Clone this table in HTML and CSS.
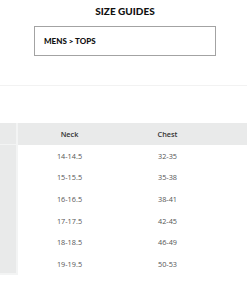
FILE: index.html
```html
<!DOCTYPE html>
<html>
<head>
<meta charset="utf-8">
<link rel="stylesheet" href="styles.css">
</head>
<body>
<div class="page">
  <h1 class="title">SIZE GUIDES</h1>
  <div class="select">MENS &gt; TOPS</div>
  <div class="sep"></div>
  <div class="table">
    <div class="row head">
      <div class="stick"></div>
      <div class="cell">Neck</div>
      <div class="cell">Chest</div>
      <div class="cell"></div>
    </div>
    <div class="row"><div class="stick"></div><div class="cell">14-14.5</div><div class="cell">32-35</div><div class="cell"></div></div>
    <div class="row"><div class="stick"></div><div class="cell">15-15.5</div><div class="cell">35-38</div><div class="cell"></div></div>
    <div class="row"><div class="stick"></div><div class="cell">16-16.5</div><div class="cell">38-41</div><div class="cell"></div></div>
    <div class="row"><div class="stick"></div><div class="cell">17-17.5</div><div class="cell">42-45</div><div class="cell"></div></div>
    <div class="row"><div class="stick"></div><div class="cell">18-18.5</div><div class="cell">46-49</div><div class="cell"></div></div>
    <div class="row last"><div class="stick"></div><div class="cell">19-19.5</div><div class="cell">50-53</div><div class="cell"></div></div>
  </div>
</div>
</body>
</html>
```
FILE: styles.css
```css
html, body {
  margin: 0;
  padding: 0;
  background: #fff;
}
.page {
  width: 247px;
  height: 296px;
  overflow: hidden;
  font-family: "Open Sans", sans-serif;
}
.title {
  margin: 0;
  padding-top: 5px;
  height: 21px;
  box-sizing: border-box;
  font-family: Lato, sans-serif;
  font-weight: 900;
  font-size: 10px;
  line-height: 12px;
  text-align: center;
  color: #111;
  padding-left: 3px;
}
.select {
  margin: 5px 0 0 34px;
  width: 182px;
  height: 30px;
  box-sizing: border-box;
  border: 1px solid #a3a3a3;
  padding-left: 9px;
  display: flex;
  align-items: center;
  font-family: Lato, sans-serif;
  font-weight: 900;
  font-size: 8px;
  color: #111;
}
.sep {
  margin-top: 29px;
  height: 1px;
  background: #f2f2f2;
}
.table {
  margin-top: 37px;
}
.row {
  display: grid;
  grid-template-columns: 18px 2px 99px 97px 1fr;
  height: 21.67px;
  align-items: center;
  font-size: 7.3px;
  color: #555;
}
.row .stick {
  grid-column: 1;
  align-self: stretch;
  background: #e9eaea;
  border-right: 2px solid #f3f4f4;
  box-sizing: border-box;
}
.row .cell:nth-child(2) { grid-column: 3; }
.row .cell {
  text-align: center;
}
.head {
  height: 22px;
  background: #e9eaea;
  color: #333;
  font-weight: 600;
}
.head .stick {
  border-bottom: 1px solid #f3f4f4;
}
.last .stick {
  border-bottom: 2px solid #f3f4f4;
}
```
